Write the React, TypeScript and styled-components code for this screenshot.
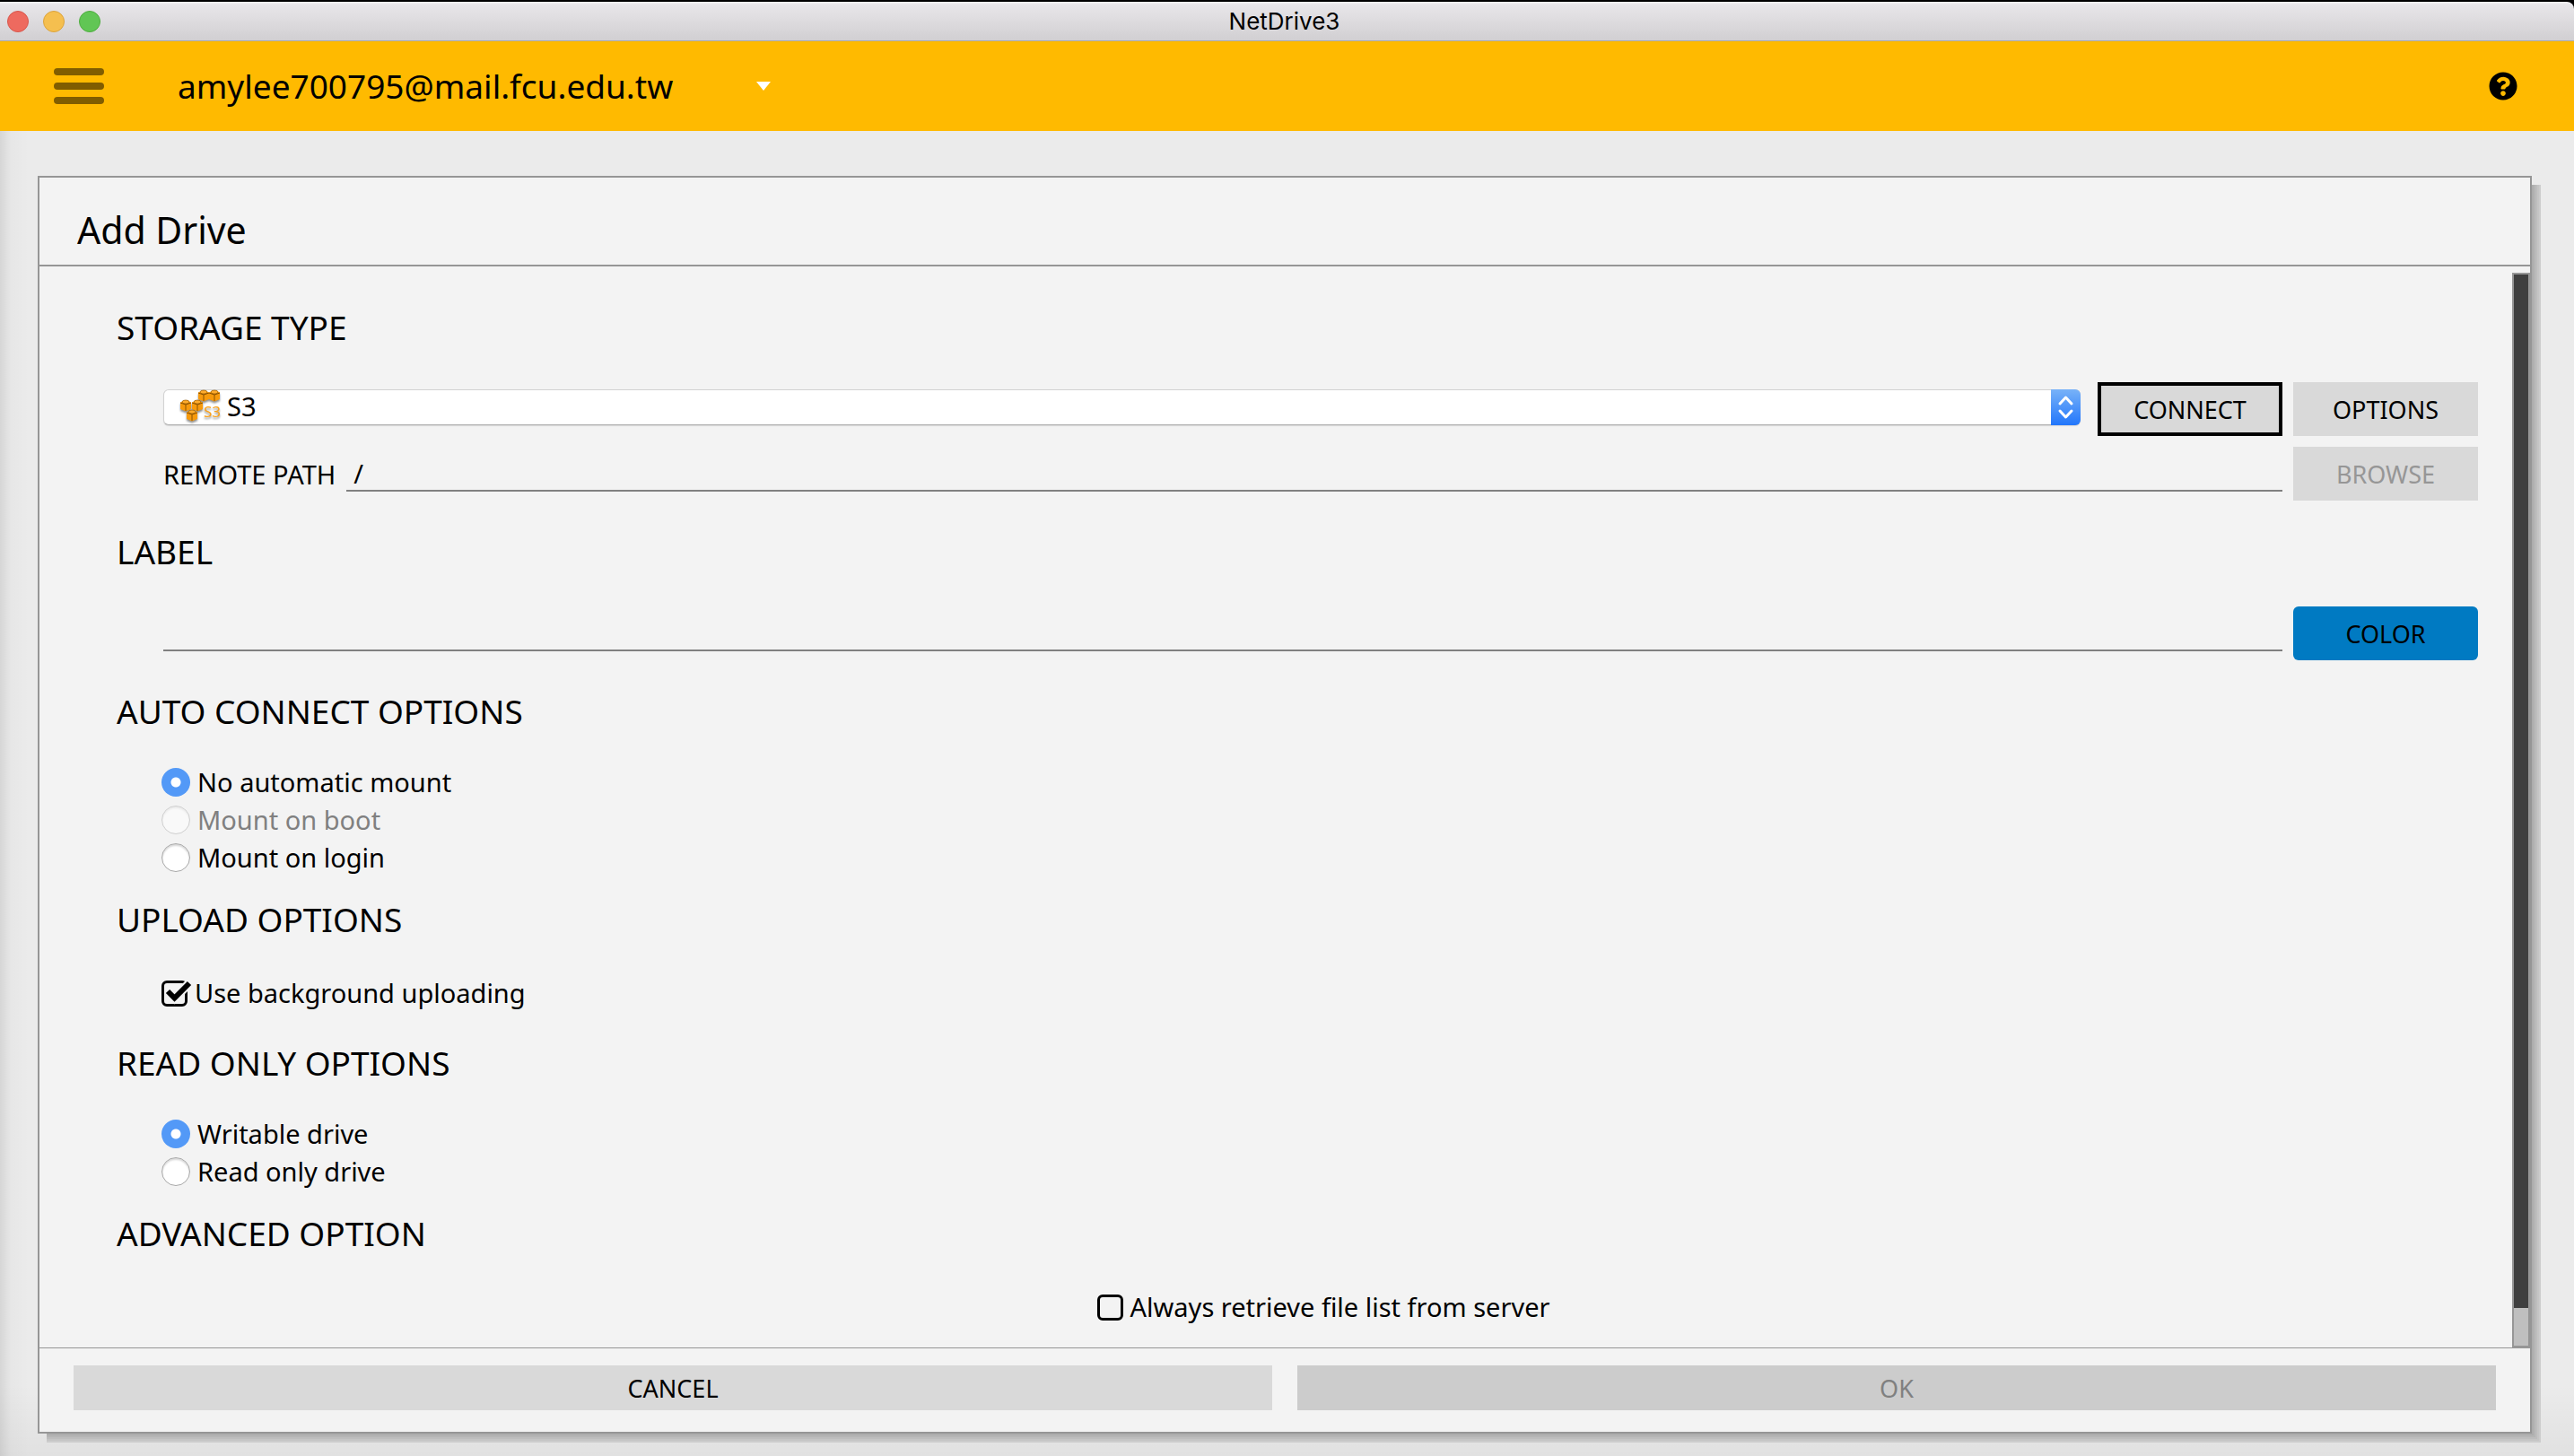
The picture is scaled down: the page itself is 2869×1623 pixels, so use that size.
import React, { useState } from "react";
import styled, { createGlobalStyle, css } from "styled-components";
import { FaQuestionCircle } from "react-icons/fa";

const uiFont = `"Lucida Grande", "Noto Sans", "Open Sans", sans-serif`;

const GlobalStyle = createGlobalStyle`
  *, *::before, *::after { box-sizing: border-box; }
  body { margin: 0; background: #000; font-family: ${uiFont}; color: #000; }
  button, input, select { font: inherit; color: inherit; margin: 0; }
  h1, h2, p { margin: 0; font-weight: 400; }
`;

const Window = styled.div`
  min-height: 100vh;
  display: flex;
  flex-direction: column;
  padding-top: 2px;
`;

const TitleBar = styled.header`
  display: grid;
  grid-template-columns: 1fr auto 1fr;
  align-items: center;
  height: 44px;
  padding: 0 14px 0 8px;
  border-radius: 0 8px 0 0;
  border-bottom: 1px solid #acaaac;
  background: linear-gradient(#f8f7f8 0, #e8e6e9 3px, #d1cfd2 100%);
`;

const Lights = styled.div`
  display: flex;
  gap: 16px;
`;

const Light = styled.button<{ $fill: string; $edge: string }>`
  width: 24px;
  height: 24px;
  padding: 0;
  border-radius: 50%;
  border: 1px solid ${(p) => p.$edge};
  background: ${(p) => p.$fill};
`;

const WindowTitle = styled.p`
  font-family: Inter, "Liberation Sans", sans-serif;
  font-size: 26px;
  line-height: 32px;
`;

const AppBar = styled.nav`
  display: flex;
  align-items: center;
  height: 100px;
  padding: 0 63px 0 60px;
  background: #ffba00;
`;

const MenuButton = styled.button`
  display: flex;
  flex-direction: column;
  gap: 8px;
  width: 56px;
  padding: 0;
  border: 0;
  background: none;
`;

const MenuBar = styled.span`
  height: 8px;
  border-radius: 4px;
  background: #805d00;
`;

const AccountButton = styled.button`
  display: flex;
  align-items: center;
  justify-content: space-between;
  width: 662px;
  margin-left: 82px;
  padding: 0;
  border: 0;
  background: none;
  font-size: 37px;
  line-height: 48px;
`;

const HelpButton = styled.button`
  display: flex;
  margin-left: auto;
  padding: 0;
  border: 0;
  background: none;
  font-size: 32px;
`;

const Main = styled.main`
  flex: 1;
  display: flex;
  padding: 50px 47px 25px 42px;
  background:
    linear-gradient(to right, rgba(0, 0, 0, 0.09), rgba(0, 0, 0, 0.02) 12px, transparent 32px),
    linear-gradient(to top, rgba(0, 0, 0, 0.045), transparent 80px),
    #ebebeb;
`;

const Panel = styled.form`
  flex: 1;
  display: flex;
  flex-direction: column;
  min-width: 0;
  border: 2px solid #969696;
  background: #f3f3f3;
  box-shadow:
    6px 6px 0 -4px #adadad,
    7px 7px 0 -3px #b5b5b5,
    8px 8px 0 -2px #bdbdbd,
    9px 9px 0 -1px #c5c5c5,
    10px 10px 0 0 #cccccc;
`;

const PanelTitle = styled.h1`
  padding: 31px 42px 12px;
  border-bottom: 2px solid #969696;
  font-size: 41px;
  line-height: 54px;
`;

const Body = styled.div`
  flex: 1;
  display: flex;
`;

const Fields = styled.div`
  flex: 1;
  min-width: 0;
  padding: 46px 38px 22px 86px;
`;

const ScrollTrack = styled.div`
  width: 20px;
  margin-top: 7px;
  padding-bottom: 42px;
  border: 2px solid #969696;
  background: #bfbfbf;
`;

const ScrollThumb = styled.div`
  height: 100%;
  background: #3f3f3f;
`;

const Section = styled.section<{ $dense?: boolean }>`
  margin-bottom: ${(p) => (p.$dense ? 26 : 35)}px;
  &:last-child { margin-bottom: 0; }
`;

const SectionTitle = styled.h2`
  font-size: 37px;
  line-height: 44px;
`;

const SectionBody = styled.div<{ $dense?: boolean; $center?: boolean }>`
  display: flex;
  flex-direction: column;
  align-items: ${(p) => (p.$center ? "center" : "stretch")};
  gap: ${(p) => (p.$dense ? 0 : 12)}px;
  margin-top: ${(p) => (p.$dense ? 36 : 39)}px;
  padding-left: ${(p) => (p.$center ? 60 : 52)}px;
`;

const Row = styled.div`
  display: flex;
  align-items: center;
  gap: 12px;
  font-size: 29px;
`;

const SelectBox = styled.div`
  position: relative;
  flex: 1;
  display: flex;
  margin: 0 7px 4px 0;
`;

const StorageSelect = styled.select`
  appearance: none;
  width: 100%;
  height: 40px;
  padding: 0 40px 2px 70px;
  border: 1px solid #d2d2d2;
  border-bottom-color: #b0b0b0;
  border-radius: 6px;
  background: #fff;
  box-shadow: 0 1px 1px rgba(0, 0, 0, 0.12);
  line-height: 36px;
`;

const StorageIcon = styled.svg`
  position: absolute;
  left: 17px;
  top: 0;
  width: 50px;
  height: 40px;
  pointer-events: none;
`;

const Stepper = styled.svg`
  position: absolute;
  right: 0;
  top: 0;
  width: 33px;
  height: 40px;
  border-radius: 0 6px 6px 0;
  background: linear-gradient(#78b2f8, #2276fb);
  pointer-events: none;
`;

const Button = styled.button<{ $tone?: "color"; $focused?: boolean }>`
  width: 206px;
  height: 60px;
  padding: 0;
  border: ${(p) => (p.$focused ? "4px solid #000" : "0")};
  background: #d9d9d9;
  font-size: 27px;
  &:disabled { color: #969696; }
  ${(p) =>
    p.$tone === "color" &&
    css`
      border-radius: 6px;
      background: #007ac2;
    `}
`;

const FieldLabel = styled.label``;

const LineInput = styled.input`
  flex: 1;
  min-width: 0;
  height: 40px;
  padding: 0 8px;
  border: 0;
  border-bottom: 2px solid #808080;
  outline: 0;
  background: none;
  line-height: 36px;
`;

const Choice = styled.label<{ $muted?: boolean }>`
  display: flex;
  align-items: center;
  gap: 8px;
  height: 42px;
  margin-left: -2px;
  font-size: 29px;
  line-height: 40px;
  color: ${(p) => (p.$muted ? "#808080" : "#000")};
`;

const Radio = styled.input`
  appearance: none;
  width: 32px;
  height: 32px;
  border: 1px solid #a8a8a8;
  border-radius: 50%;
  background: #fff;
  box-shadow: inset 0 2px 2px rgba(0, 0, 0, 0.16);
  &:checked {
    border: 0;
    background: radial-gradient(circle, #fff 5px, #5399f7 6px);
    box-shadow: none;
  }
  &:disabled {
    border-color: #cfcfcf;
    background: #f9f9f9;
    box-shadow: inset 0 2px 2px rgba(0, 0, 0, 0.06);
  }
`;

const CheckHolder = styled.span`
  position: relative;
  display: flex;
`;

const CheckInput = styled.input`
  appearance: none;
  width: 29px;
  height: 29px;
  border: 3px solid #000;
  border-radius: 6px;
`;

const Tick = styled.svg`
  position: absolute;
  left: 0;
  top: 0;
  width: 34px;
  height: 29px;
  overflow: visible;
  pointer-events: none;
`;

const Footer = styled.footer`
  display: flex;
  gap: 28px;
  padding: 19px 38px 24px;
  border-top: 1px solid #969696;
`;

const FooterButton = styled.button`
  flex: 1;
  height: 50px;
  padding: 0;
  border: 0;
  background: #d9d9d9;
  font-size: 27px;
  &:disabled {
    background: #cccccc;
    color: #808080;
  }
`;

function Cube({ x, y }: { x: number; y: number }) {
  return (
    <g transform={`translate(${x} ${y})`}>
      <path d="M0 3.500L6 1L12 3.500V11L6 13.500L0 11Z" fill="#f79a0c" />
      <ellipse cx="6" cy="3" rx="4" ry="2" fill="#ffab2b" stroke="#9a5c00" strokeWidth="0.700" />
      <path d="M0 4L6 6L12 4M6 6V13" fill="none" stroke="#8a5200" strokeWidth="1" />
    </g>
  );
}

const CubeStack = styled.g`
  filter: drop-shadow(0 2px 1px rgba(0, 0, 0, 0.45));
`;

function S3Icon() {
  return (
    <StorageIcon viewBox="0 0 50 40" aria-hidden="true">
      <CubeStack>
        <Cube x={22} y={0} />
        <Cube x={34} y={0} />
        <Cube x={2} y={11} />
        <Cube x={15} y={11} />
        <Cube x={9} y={22} />
        <text x="28" y="31" fontSize="17" fontFamily="Noto Sans, sans-serif" fill="#f9a11b">
          S3
        </text>
      </CubeStack>
    </StorageIcon>
  );
}

function CheckOption(props: {
  label: string;
  checked: boolean;
  onChange: (value: boolean) => void;
}) {
  return (
    <Choice>
      <CheckHolder>
        <CheckInput
          type="checkbox"
          checked={props.checked}
          onChange={(e) => props.onChange(e.target.checked)}
        />
        {props.checked && (
          <Tick viewBox="0 0 34 29" aria-hidden="true">
            <path d="M7 12L14.500 19.500L30 4" fill="none" stroke="#f3f3f3" strokeWidth="10" />
            <path d="M7 12L14.500 19.500L31 3" fill="none" stroke="#000" strokeWidth="6" />
          </Tick>
        )}
      </CheckHolder>
      {props.label}
    </Choice>
  );
}

function RadioGroup(props: {
  name: string;
  value: string;
  options: { id: string; label: string; disabled?: boolean }[];
  onChange: (id: string) => void;
}) {
  return (
    <>
      {props.options.map((o) => (
        <Choice key={o.id} $muted={o.disabled}>
          <Radio
            type="radio"
            name={props.name}
            checked={props.value === o.id}
            disabled={o.disabled}
            onChange={() => props.onChange(o.id)}
          />
          {o.label}
        </Choice>
      ))}
    </>
  );
}

export default function App() {
  const [path, setPath] = useState("/");
  const [label, setLabel] = useState("");
  const [mount, setMount] = useState("none");
  const [access, setAccess] = useState("write");
  const [background, setBackground] = useState(true);
  const [always, setAlways] = useState(false);

  return (
    <>
      <GlobalStyle />
      <Window>
        <TitleBar>
          <Lights>
            <Light type="button" aria-label="Close" $fill="#ee6a5f" $edge="#d8574c" />
            <Light type="button" aria-label="Minimize" $fill="#f5bf4f" $edge="#dca33b" />
            <Light type="button" aria-label="Zoom" $fill="#61c655" $edge="#4fae40" />
          </Lights>
          <WindowTitle>NetDrive3</WindowTitle>
        </TitleBar>

        <AppBar>
          <MenuButton type="button" aria-label="Menu">
            <MenuBar />
            <MenuBar />
            <MenuBar />
          </MenuButton>
          <AccountButton type="button">
            amylee700795@mail.fcu.edu.tw
            <svg width="18" height="10" viewBox="0 0 18 10" aria-hidden="true">
              <path d="M1 0H17L9 10Z" fill="#fff" />
            </svg>
          </AccountButton>
          <HelpButton type="button" aria-label="Help">
            <FaQuestionCircle />
          </HelpButton>
        </AppBar>

        <Main>
          <Panel onSubmit={(e) => e.preventDefault()}>
            <PanelTitle>Add Drive</PanelTitle>
            <Body>
              <Fields>
                <Section>
                  <SectionTitle>STORAGE TYPE</SectionTitle>
                  <SectionBody>
                    <Row>
                      <SelectBox>
                        <StorageSelect aria-label="Storage type" defaultValue="s3">
                          <option value="s3">S3</option>
                        </StorageSelect>
                        <S3Icon />
                        <Stepper viewBox="0 0 33 40" aria-hidden="true">
                          <path
                            d="M10 16L16.500 9L23 16M10 24L16.500 31L23 24"
                            fill="none"
                            stroke="#fff"
                            strokeWidth="3"
                            strokeLinecap="round"
                            strokeLinejoin="round"
                          />
                        </Stepper>
                      </SelectBox>
                      <Button type="button" $focused>CONNECT</Button>
                      <Button type="button">OPTIONS</Button>
                    </Row>
                    <Row>
                      <FieldLabel htmlFor="remote-path">REMOTE PATH</FieldLabel>
                      <LineInput
                        id="remote-path"
                        value={path}
                        onChange={(e) => setPath(e.target.value)}
                      />
                      <Button type="button" disabled>BROWSE</Button>
                    </Row>
                  </SectionBody>
                </Section>

                <Section>
                  <SectionTitle>
                    <label htmlFor="drive-label">LABEL</label>
                  </SectionTitle>
                  <SectionBody>
                    <Row>
                      <LineInput
                        id="drive-label"
                        value={label}
                        onChange={(e) => setLabel(e.target.value)}
                      />
                      <Button type="button" $tone="color">COLOR</Button>
                    </Row>
                  </SectionBody>
                </Section>

                <Section $dense>
                  <SectionTitle>AUTO CONNECT OPTIONS</SectionTitle>
                  <SectionBody $dense>
                    <RadioGroup
                      name="mount"
                      value={mount}
                      onChange={setMount}
                      options={[
                        { id: "none", label: "No automatic mount" },
                        { id: "boot", label: "Mount on boot", disabled: true },
                        { id: "login", label: "Mount on login" },
                      ]}
                    />
                  </SectionBody>
                </Section>

                <Section>
                  <SectionTitle>UPLOAD OPTIONS</SectionTitle>
                  <SectionBody>
                    <CheckOption
                      label="Use background uploading"
                      checked={background}
                      onChange={setBackground}
                    />
                  </SectionBody>
                </Section>

                <Section $dense>
                  <SectionTitle>READ ONLY OPTIONS</SectionTitle>
                  <SectionBody $dense>
                    <RadioGroup
                      name="access"
                      value={access}
                      onChange={setAccess}
                      options={[
                        { id: "write", label: "Writable drive" },
                        { id: "read", label: "Read only drive" },
                      ]}
                    />
                  </SectionBody>
                </Section>

                <Section>
                  <SectionTitle>ADVANCED OPTION</SectionTitle>
                  <SectionBody $center>
                    <CheckOption
                      label="Always retrieve file list from server"
                      checked={always}
                      onChange={setAlways}
                    />
                  </SectionBody>
                </Section>
              </Fields>
              <ScrollTrack>
                <ScrollThumb />
              </ScrollTrack>
            </Body>
            <Footer>
              <FooterButton type="button">CANCEL</FooterButton>
              <FooterButton type="submit" disabled>OK</FooterButton>
            </Footer>
          </Panel>
        </Main>
      </Window>
    </>
  );
}
